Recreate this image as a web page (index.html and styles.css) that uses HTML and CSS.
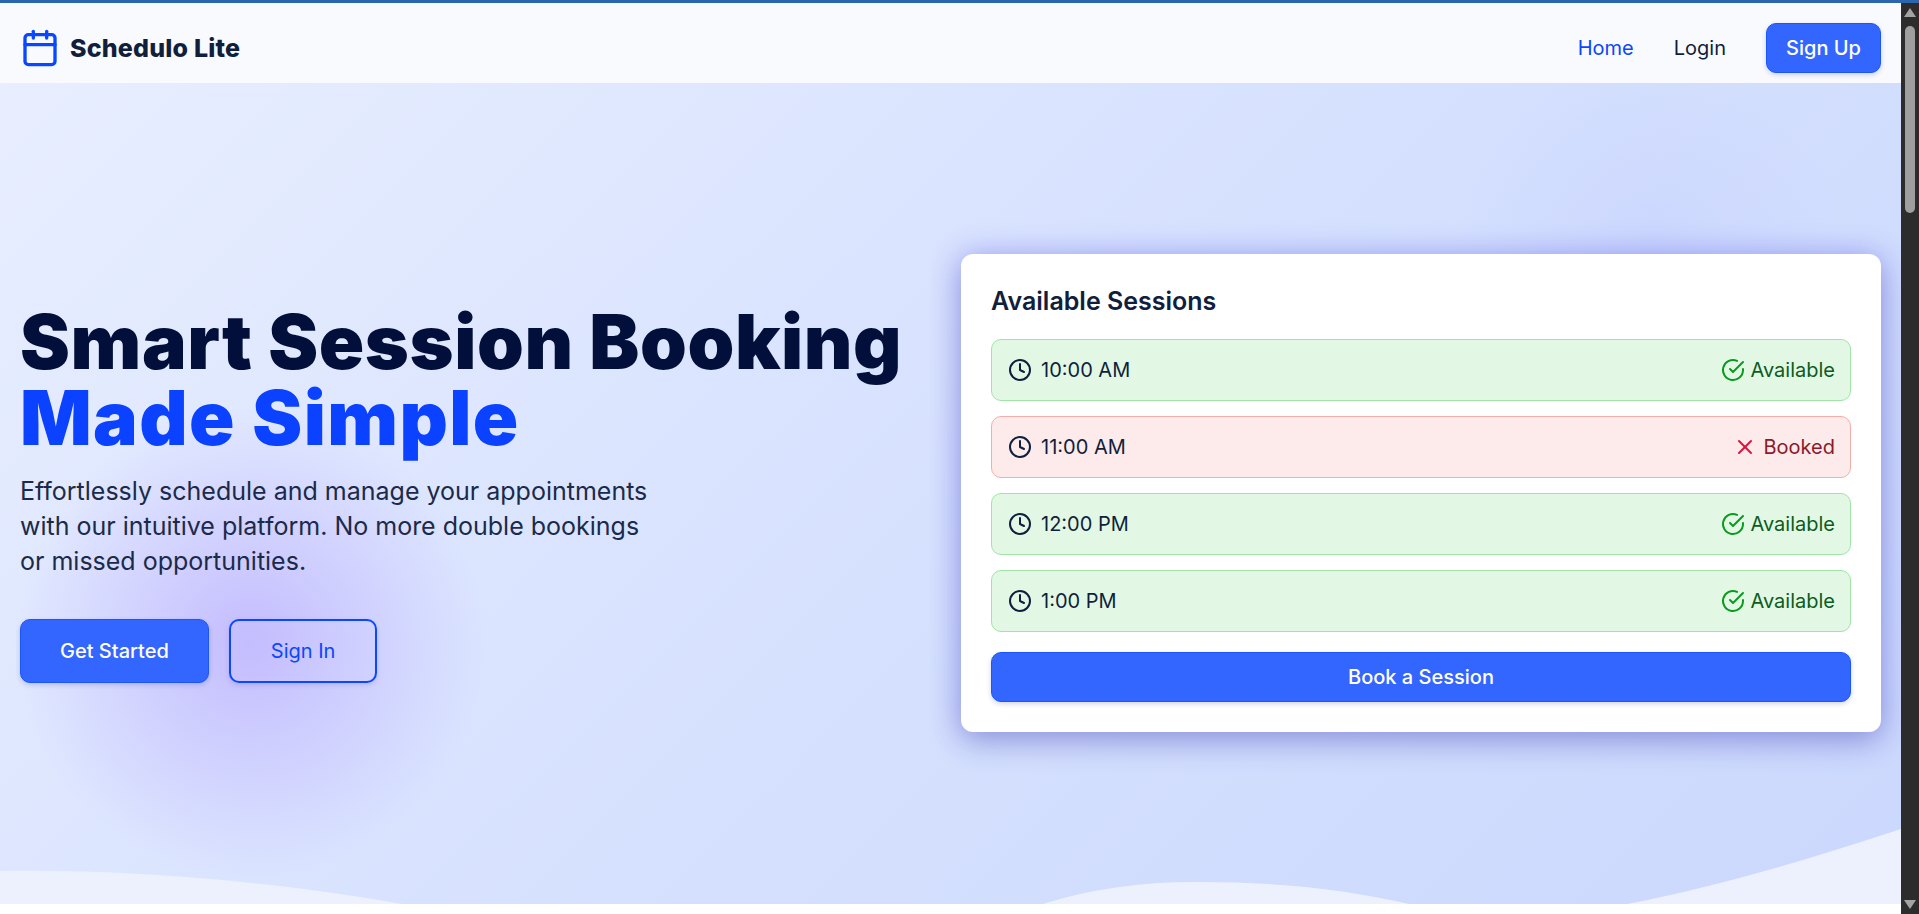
FILE: index.html
```html
<!DOCTYPE html>
<html lang="en">
<head>
    <meta charset="UTF-8">
    <meta name="viewport" content="width=device-width, initial-scale=1.0">
    <title>Schedulo Lite</title>
    <link rel="stylesheet" href="styles.css">
</head>
<body>
    <div class="top-strip"></div>
    <div class="window">
        <div class="page">
            <nav class="navbar">
                <a class="brand" href="#">
                    <svg class="brand-icon" viewBox="0 0 24 24" fill="none" stroke="currentColor" stroke-width="2" stroke-linecap="round" stroke-linejoin="round">
                        <path d="M8 2v4"/>
                        <path d="M16 2v4"/>
                        <rect width="18" height="18" x="3" y="4" rx="2"/>
                        <path d="M3 10h18"/>
                    </svg>
                    <span>Schedulo Lite</span>
                </a>
                <div class="nav-links">
                    <a class="nav-link active" href="#">Home</a>
                    <a class="nav-link" href="#">Login</a>
                    <a class="btn btn-primary btn-nav" href="#">Sign Up</a>
                </div>
            </nav>

            <section class="hero">
                <div class="hero-text">
                    <h1>Smart Session Booking <span class="accent">Made Simple</span></h1>
                    <p>Effortlessly schedule and manage your appointments with our intuitive platform. No more double bookings or missed opportunities.</p>
                    <div class="hero-buttons">
                        <a class="btn btn-primary btn-large" href="#">Get Started</a>
                        <a class="btn btn-outline btn-large" href="#">Sign In</a>
                    </div>
                </div>

                <div class="sessions-card">
                    <h2>Available Sessions</h2>
                    <div class="session available">
                        <span class="session-time">
                            <svg class="icon" viewBox="0 0 24 24"><circle cx="12" cy="12" r="10"/><path d="M12 6v6l4 2"/></svg>
                            10:00 AM
                        </span>
                        <span class="session-status">
                            <svg class="icon status-icon" viewBox="0 0 24 24"><path d="M22 11.08V12a10 10 0 1 1-5.93-9.14"/><path d="M22 4 12 14.01l-3-3"/></svg>
                            Available
                        </span>
                    </div>
                    <div class="session booked">
                        <span class="session-time">
                            <svg class="icon" viewBox="0 0 24 24"><circle cx="12" cy="12" r="10"/><path d="M12 6v6l4 2"/></svg>
                            11:00 AM
                        </span>
                        <span class="session-status">
                            <svg class="icon status-icon" viewBox="0 0 24 24"><path d="M18 6 6 18"/><path d="m6 6 12 12"/></svg>
                            Booked
                        </span>
                    </div>
                    <div class="session available">
                        <span class="session-time">
                            <svg class="icon" viewBox="0 0 24 24"><circle cx="12" cy="12" r="10"/><path d="M12 6v6l4 2"/></svg>
                            12:00 PM
                        </span>
                        <span class="session-status">
                            <svg class="icon status-icon" viewBox="0 0 24 24"><path d="M22 11.08V12a10 10 0 1 1-5.93-9.14"/><path d="M22 4 12 14.01l-3-3"/></svg>
                            Available
                        </span>
                    </div>
                    <div class="session available">
                        <span class="session-time">
                            <svg class="icon" viewBox="0 0 24 24"><circle cx="12" cy="12" r="10"/><path d="M12 6v6l4 2"/></svg>
                            1:00 PM
                        </span>
                        <span class="session-status">
                            <svg class="icon status-icon" viewBox="0 0 24 24"><path d="M22 11.08V12a10 10 0 1 1-5.93-9.14"/><path d="M22 4 12 14.01l-3-3"/></svg>
                            Available
                        </span>
                    </div>
                    <a class="btn btn-primary btn-book" href="#">Book a Session</a>
                </div>

                <svg class="wave" viewBox="0 0 1901 80" preserveAspectRatio="none">
                    <path d="M0 47C130 45 280 58 402 80H0Z"/>
                    <path d="M1043 80C1090 65 1140 58 1196 58C1270 58 1340 64 1409 80Z"/>
                    <path d="M1627 80C1720 62 1810 35 1901 5V80Z"/>
                </svg>
            </section>
        </div>

        <div class="scrollbar">
            <div class="arrow-up"></div>
            <div class="thumb"></div>
            <div class="arrow-down"></div>
        </div>
    </div>
</body>
</html>
```

FILE: styles.css
```css
* {
    box-sizing: border-box;
}
html, body {
    height: 100%;
}
body {
    display: flex;
    flex-direction: column;
    margin: 0;
    overflow: hidden;
    font-family: 'Inter', 'Liberation Sans', sans-serif;
    background-color: #fff;
    color: #0f1f3d;
}
a {
    text-decoration: none;
}
.top-strip {
    height: 3px;
    background-color: #2a66b0;
}
.window {
    display: flex;
    flex: 1;
    min-height: 0;
}
.page {
    flex: 1;
    min-width: 0;
}

/* navbar */
.navbar {
    display: flex;
    align-items: center;
    justify-content: space-between;
    height: 80px;
    padding: 10px 20px 0;
    background-color: #f9fafe;
}
.brand {
    display: flex;
    align-items: center;
    gap: 10px;
    font-size: 25px;
    font-weight: 800;
    letter-spacing: 0.2px;
    color: #10203c;
}
.brand-icon {
    width: 40px;
    height: 40px;
    color: #0a47ff;
}
.nav-links {
    display: flex;
    align-items: center;
    gap: 40px;
}
.nav-link {
    font-size: 20px;
    color: #0f1f3d;
}
.nav-link.active {
    color: #0a47ff;
}

/* buttons */
.btn {
    display: flex;
    align-items: center;
    justify-content: center;
    border-radius: 10px;
    font-size: 20px;
    font-weight: 500;
}
.btn-primary {
    background-color: #3366ff;
    border: 1px solid #1a55ff;
    color: #fff;
    box-shadow: 0 2px 5px rgba(30, 50, 120, 0.2);
}
.btn-outline {
    border: 2px solid #0a47ff;
    color: #0a47ff;
    font-weight: 400;
    box-shadow: 0 2px 5px rgba(30, 50, 120, 0.15);
}
.btn-nav {
    width: 115px;
    height: 50px;
}
.btn-large {
    height: 64px;
    padding: 0 39px;
}
.btn-outline.btn-large {
    padding: 0 40px;
}
.btn-book {
    height: 50px;
    margin-top: 20px;
}

/* hero */
.hero {
    position: relative;
    display: flex;
    align-items: center;
    justify-content: space-between;
    height: 821px;
    padding: 0 20px 1px;
    overflow: hidden;
    background:
        radial-gradient(circle 235px at 250px 560px, rgba(186, 172, 255, 0.72) 0%, rgba(186, 172, 255, 0.36) 50%, rgba(186, 172, 255, 0) 100%),
        radial-gradient(circle 190px at 1650px 160px, rgba(176, 186, 255, 0.2), rgba(176, 186, 255, 0) 100%),
        linear-gradient(135deg, #e8eeff 0%, #d6e1fe 50%, #cbd8fd 100%);
}
.hero-text {
    width: 900px;
    margin-top: 2px;
}
.hero-text h1 {
    margin: -1px 0 0;
    font-size: 75px;
    font-weight: 900;
    letter-spacing: 0.6px;
    line-height: 76px;
    color: #020f3a;
}
.accent {
    display: block;
    letter-spacing: 1.4px;
    color: #0a42ff;
}
.hero-text p {
    width: 650px;
    margin: 18px 0 40px;
    font-size: 25px;
    line-height: 35px;
    color: #1c2a4a;
}
.hero-buttons {
    display: flex;
    gap: 20px;
}

/* sessions card */
.sessions-card {
    position: relative;
    z-index: 1;
    width: 920px;
    padding: 30px;
    background-color: #fff;
    border-radius: 12px;
    box-shadow: 0 10px 30px rgba(50, 50, 150, 0.3), 0 0 30px rgba(90, 90, 255, 0.3);
}
.sessions-card h2 {
    margin: 0 0 23px;
    padding-top: 2px;
    font-size: 25px;
    font-weight: 600;
    line-height: 30px;
    color: #10203c;
}
.session {
    display: flex;
    align-items: center;
    justify-content: space-between;
    height: 62px;
    margin-bottom: 15px;
    padding: 0 15px 0 16px;
    border: 1px solid;
    border-radius: 10px;
    font-size: 20px;
}
.session:last-of-type {
    margin-bottom: 0;
}
.session.available {
    background-color: #e3f8e4;
    border-color: #a0e5a5;
}
.session.booked {
    background-color: #fdeaea;
    border-color: #f4aeaa;
}
.session-time, .session-status {
    display: flex;
    align-items: center;
}
.session-time {
    gap: 9px;
}
.session-status {
    gap: 6px;
}
.available .session-status {
    color: #0b5c1e;
}
.booked .session-status {
    color: #8b1a2b;
}
.icon {
    width: 24px;
    height: 24px;
    fill: none;
    stroke: currentColor;
    stroke-width: 2;
    stroke-linecap: round;
    stroke-linejoin: round;
}
.available .status-icon {
    color: #0a9a1f;
}
.booked .status-icon {
    color: #dc143c;
}

/* bottom wave */
.wave {
    position: absolute;
    left: 0;
    bottom: 0;
    width: 100%;
    height: 80px;
    fill: #edf1fe;
}

/* fake scrollbar from the screenshot */
.scrollbar {
    display: flex;
    flex-direction: column;
    align-items: center;
    width: 18px;
    padding: 5px 0 5px;
    background-color: #2c2c2c;
}
.arrow-up {
    width: 0;
    height: 0;
    border-left: 6px solid transparent;
    border-right: 6px solid transparent;
    border-bottom: 9px solid #a3a3a3;
}
.thumb {
    width: 10px;
    height: 187px;
    margin-top: 9px;
    background-color: #9f9f9f;
    border-radius: 5px;
}
.arrow-down {
    width: 0;
    height: 0;
    margin-top: auto;
    border-left: 6px solid transparent;
    border-right: 6px solid transparent;
    border-top: 9px solid #a3a3a3;
}
```
